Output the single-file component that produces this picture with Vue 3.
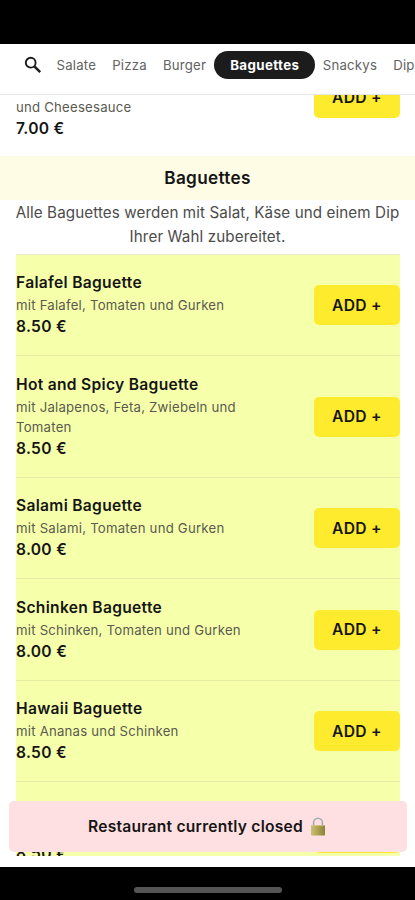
<script setup>
const before = ['Salate', 'Pizza', 'Burger']
const after = ['Snackys', 'Dips']
const items = [
  { name: 'Falafel Baguette', desc: 'mit Falafel, Tomaten und Gurken', price: '8.50 €' },
  { name: 'Hot and Spicy Baguette', desc: 'mit Jalapenos, Feta, Zwiebeln und Tomaten', price: '8.50 €' },
  { name: 'Salami Baguette', desc: 'mit Salami, Tomaten und Gurken', price: '8.00 €' },
  { name: 'Schinken Baguette', desc: 'mit Schinken, Tomaten und Gurken', price: '8.00 €' },
  { name: 'Hawaii Baguette', desc: 'mit Ananas und Schinken', price: '8.50 €' },
]
</script>

<template>
  <div class="phone">
    <div class="status"></div>
    <nav class="tabs">
      <svg class="search" viewBox="0 0 18 18" fill="none" stroke="#1c1c1c">
        <circle cx="6.7" cy="6.7" r="4.9" stroke-width="1.9" />
        <path d="M10.4 10.4 L16.2 16.2" stroke-width="2.5" />
      </svg>
      <span v-for="t in before" :key="t" class="tab">{{ t }}</span>
      <span class="tab active">Baguettes</span>
      <span v-for="t in after" :key="t" class="tab">{{ t }}</span>
    </nav>
    <main class="content">
      <section class="previous">
        <div class="item">
          <div class="text">
            <div class="desc">und Cheesesauce</div>
            <div class="price">7.00 €</div>
          </div>
          <button class="add">ADD +</button>
        </div>
      </section>
      <h2 class="heading">Baguettes</h2>
      <p class="intro">Alle Baguettes werden mit Salat, Käse und einem Dip Ihrer Wahl zubereitet.</p>
      <section class="list">
        <div v-for="i in items" :key="i.name" class="item">
          <div class="text">
            <div class="name">{{ i.name }}</div>
            <div class="desc">{{ i.desc }}</div>
            <div class="price">{{ i.price }}</div>
          </div>
          <button class="add">ADD +</button>
        </div>
        <div class="item last">
          <div class="text">
            <div class="price">8.50 €</div>
          </div>
          <button class="add">ADD +</button>
        </div>
      </section>
    </main>
    <footer class="system"><div class="handle"></div></footer>
    <div class="banner">
      <span>Restaurant currently closed</span>
      <svg class="lock" viewBox="0 0 16 19">
        <defs>
          <linearGradient id="body" x1="0" x2="1">
            <stop offset="0" stop-color="#c9bf79" />
            <stop offset="0.4" stop-color="#b5a956" />
            <stop offset="1" stop-color="#8b8037" />
          </linearGradient>
        </defs>
        <path d="M3.6 9 V5.6 a4.4 4.4 0 0 1 8.8 0 V9" fill="none" stroke="#a2acb5" stroke-width="1.6" />
        <rect x="1" y="8" width="14" height="10.5" rx="1" fill="url(#body)" />
        <path d="M1.5 8.6 H14.5" stroke="#d5cd91" stroke-width="0.8" />
      </svg>
    </div>
  </div>
</template>

<style>
body {
  margin: 0;
  background: #fff;
}
</style>

<style scoped>
.phone {
  position: relative;
  display: flex;
  flex-direction: column;
  width: 415px;
  height: 900px;
  overflow: hidden;
  background: #fff;
  color: #151515;
  font-family: Inter, "Liberation Sans", sans-serif;
}
.status {
  flex: 0 0 44px;
  background: #000;
}
.tabs {
  display: flex;
  align-items: flex-start;
  flex: 0 0 51px;
  box-sizing: border-box;
  padding: 7px 0 0 24px;
  border-bottom: 1px solid #e6e6e6;
  overflow: hidden;
  white-space: nowrap;
}
.search {
  flex: none;
  width: 18px;
  height: 18px;
  margin: 5px 6.5px 0 0;
}
.tab {
  flex: none;
  padding: 0 8.2px 0 8px;
  font-size: 13.2px;
  line-height: 28px;
  letter-spacing: 0.2px;
  color: #626262;
}
.active {
  padding: 0 15.5px 0 15.8px;
  border-radius: 14px;
  background: #1c1c1c;
  color: #fff;
  font-weight: 700;
  font-size: 13.3px;
  letter-spacing: 0.4px;
}
.content {
  flex: 0 0 761px;
  overflow: hidden;
}
.previous {
  height: 61px;
  display: flex;
  align-items: flex-end;
  padding: 0 15px 0 16px;
}
.previous .item {
  flex: 1;
  align-items: flex-end;
  border: 0;
  padding: 0 0 14.5px;
}
.previous .text {
  width: 140px;
}
.previous .add {
  margin-bottom: 24px;
}
.heading {
  margin: 0;
  height: 44px;
  background: #fffce6;
  text-align: center;
  font-size: 17.2px;
  line-height: 43px;
  font-weight: 600;
  letter-spacing: 0.3px;
}
.intro {
  margin: 0;
  padding: 0.5px 10px 5.5px;
  text-align: center;
  font-size: 15.2px;
  line-height: 24px;
  letter-spacing: 0.1px;
  color: #4c4c4c;
}
.list {
  margin: 0 15px 0 16px;
  border-top: 1px solid #e8ebd0;
  background: #f6ffaa;
}
.item {
  display: flex;
  align-items: center;
  justify-content: space-between;
  padding: 16.2px 0 15.8px;
  border-bottom: 1px solid #e5eca3;
}
.last {
  height: 74px;
  box-sizing: border-box;
  align-items: flex-start;
  padding: 30.5px 0 0;
  border: 0;
}
.last .price {
  margin-top: 29px;
}
.text {
  width: 245px;
}
.name,
.price {
  font-size: 15.6px;
  line-height: 24.1px;
  font-weight: 600;
  letter-spacing: 0.3px;
}
.desc {
  font-size: 13.2px;
  line-height: 20.2px;
  letter-spacing: 0.22px;
  color: #5a5a50;
}
.add {
  flex: none;
  width: 86px;
  height: 40px;
  padding: 0;
  border: 0;
  border-radius: 5px;
  background: #ffeb2d;
  color: #151515;
  font-family: inherit;
  font-size: 15.6px;
  font-weight: 600;
  letter-spacing: 0.3px;
}
.system {
  display: flex;
  justify-content: center;
  flex: none;
  margin-top: 10.5px;
  height: 34px;
  background: #000;
}
.handle {
  width: 148px;
  height: 6px;
  margin-top: 20.5px;
  border-radius: 3px;
  background: #555;
}
.banner {
  position: absolute;
  left: 9px;
  top: 801px;
  width: 398px;
  height: 51px;
  box-sizing: border-box;
  padding-right: 2px;
  display: flex;
  align-items: center;
  justify-content: center;
  gap: 7px;
  border-radius: 5px;
  background: #ffe0e2;
  font-size: 15.6px;
  font-weight: 600;
  letter-spacing: 0.24px;
}
.lock {
  width: 16px;
  height: 19px;
}
</style>
